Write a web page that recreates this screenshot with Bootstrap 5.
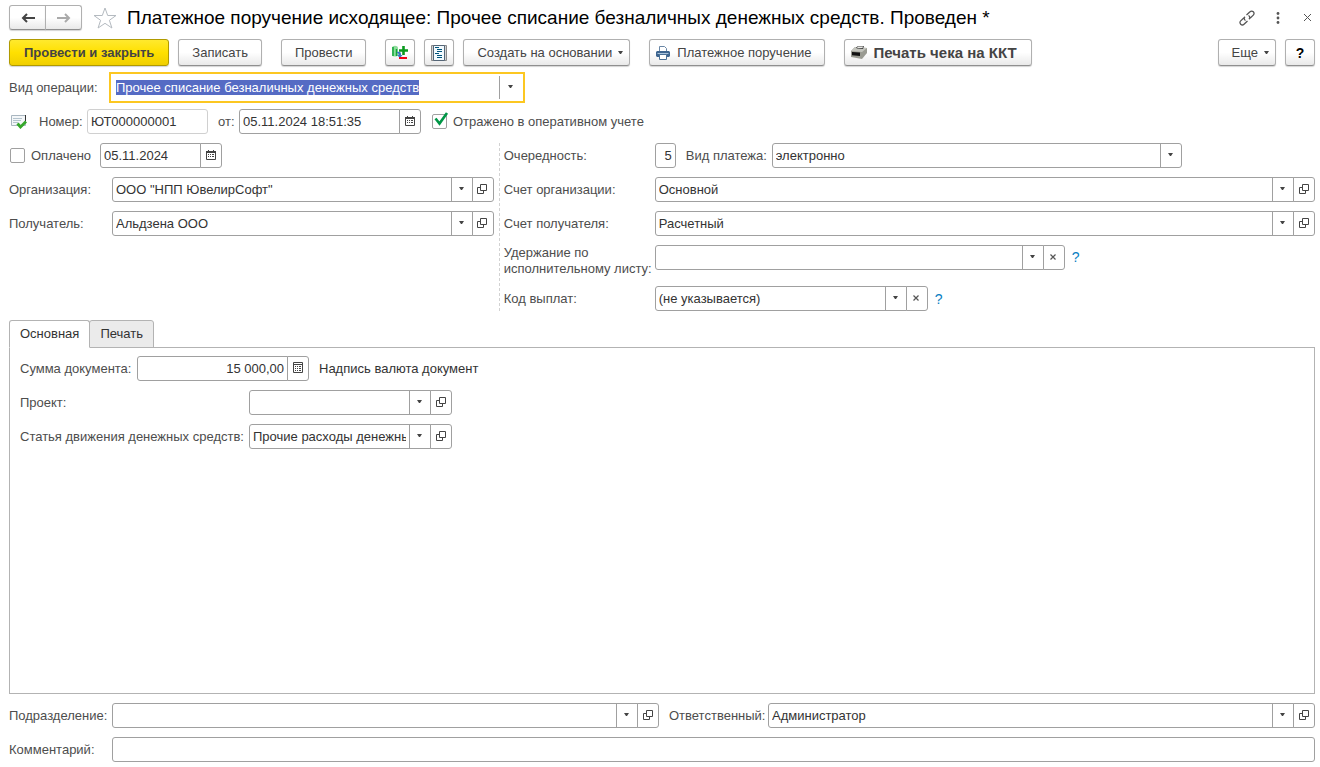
<!DOCTYPE html>
<html lang="ru">
<head>
<meta charset="utf-8">
<meta name="viewport" content="width=device-width, initial-scale=1">
<title>Платежное поручение исходящее</title>
<link href="https://cdn.jsdelivr.net/npm/bootstrap@5.3.0/dist/css/bootstrap.min.css" rel="stylesheet">
<style>
  :root { --line: #a0a0a0; --ink: #333; --label: #4d4d4d; }
  body { font: 13px/16px "Liberation Sans", Arial, sans-serif; color: var(--label); background: #fff; }
  .doc-form { padding: 5px 5px 5px 9px; }
  .doc-title { font-size: 19px; line-height: 24px; font-weight: 400; color: #000; margin: 0 0 0 10px; }
  svg { display: block; flex: none; }

  /* command buttons */
  .btn-cmd { --bs-btn-font-size: 13px; --bs-btn-line-height: 16px; --bs-btn-border-radius: 3px;
    --bs-btn-color: #444; --bs-btn-hover-color: #222; --bs-btn-border-color: #b0b0b0; --bs-btn-hover-border-color: #909090;
    height: 27px; padding: 0 13px; display: inline-flex; align-items: center; white-space: nowrap;
    background: linear-gradient(#fff 50%, #e9e9e9); border-bottom-color: #8f8f8f; box-shadow: 0 1px 1px #d4d4d4; }
  .btn-main { padding: 0 14px; background: linear-gradient(#ffe92e, #ffe000 50%, #f0cf00); border-color: #b09a00; font-weight: 700; }
  .btn-square { width: 30px; padding: 0; justify-content: center; }
  .btn-menu { padding-right: 6px; gap: 6px; }
  .btn-print { padding: 0 12px 0 6px; gap: 7px; }
  .btn-receipt { --bs-btn-font-size: 15px; font-weight: 700; padding-right: 14px; }
  .btn-help { --bs-btn-font-size: 14px; --bs-btn-color: #000; font-weight: 700; }
  .btn-nav { width: 37px; height: 25px; padding: 0; justify-content: center; }
  .btn-plain { padding: 0; border: 0; background: none; color: #4d4d4d; }
  .btn-star { margin-left: 11px; }
  .toolbar { gap: 9px; margin-top: 9px; }
  .group-start { margin-left: 10px; }
  .window-tools { gap: 17px; padding-right: 4px; }

  /* field rows */
  .line { display: flex; align-items: center; margin-top: 9px; }
  .line > label, .line > span { flex: none; }
  .line-tight { margin-top: 6px; }
  .cap { width: 103px; }
  .cap-op { width: 100px; }
  .cap-right { width: 151px; }
  .cap-tab { width: 229px; }
  .cap-sum { width: 117px; }
  .cap-pay { width: 86px; }
  .cap-resp { width: 99px; }
  .cap-num { width: 48px; }
  .cap-from { width: 21px; }
  .cap-paid { width: 69px; }
  .gap-before { margin-left: 10px; }
  .fld { width: auto; flex-wrap: nowrap; height: 25px; min-width: 0; }
  .fld > .form-control, .fld > .form-select { font-size: 13px; line-height: 16px; height: 25px; min-height: 0; padding: 0 3px;
    color: var(--ink); border-color: var(--line); border-radius: 3px; min-width: 0; background-color: #fff; }
  .fld > .btn { width: 22px; height: 25px; padding: 0 1px 2px 0; display: flex; align-items: center; justify-content: center;
    border-color: var(--line); border-radius: 3px; color: #444; background: #fff; flex: none; }
  .fld > .form-select { padding-right: 24px;
    background: #fff url("data:image/svg+xml,%3Csvg xmlns='http://www.w3.org/2000/svg' width='21' height='23'%3E%3Cpath d='M0 0h1v23H0z' fill='%23a0a0a0'/%3E%3Cpath d='M8 9h5l-2 3h-1z' fill='%23444'/%3E%3C/svg%3E") no-repeat right 0 top 0 / 21px 23px; }
  .fld > .form-control:focus { box-shadow: none; }
  .num { text-align: right; }
  .w-code { flex: 0 1 273px; }
  .w-wide { flex: 0 1 410px; }
  .w-date { width: 122px; }
  .w-stamp { width: 182px; }
  .w-sum { width: 172px; }
  .w-ref { width: 203px; }
  .w-number { width: 121px; }
  .w-order { width: 21px; }
  .fld > .quiet { border-color: #d0d0d0; }
  .status-icon { margin: 0 12px 0 2px; }

  .fld-active { width: 416px; height: 31px; border: 2px solid #fcc721; padding: 2px; align-items: center; }
  .fld-active > .form-control { border: 0; height: 23px; padding: 0 3px; border-radius: 0; }
  .fld-active > .btn { border-width: 0 0 0 1px; border-radius: 0; height: 23px; margin-left: 0 !important; }
  .fld-active > .form-control::selection { background: rgba(84,106,196,.996); color: #fff; }

  .tick { appearance: none; position: relative; flex: none; width: 15px; height: 15px; margin: 0 6px 0 1px; border: 1px solid var(--line); border-radius: 2px; background: #fff; }
  .tick:checked::after { content: ""; position: absolute; left: 1px; top: -3px; width: 15px; height: 14px;
    background: url("data:image/svg+xml,%3Csvg xmlns='http://www.w3.org/2000/svg' width='15' height='14'%3E%3Cpath d='M1.500 6.500l4 5L13 1' fill='none' stroke='%23009646' stroke-width='2.600'/%3E%3C/svg%3E") no-repeat; }
  .hint { color: #0a7ec2; text-decoration: none; font-size: 14px; margin-left: 7px; }

  .halves { display: grid; grid-template-columns: minmax(0, 3fr) minmax(0, 5fr); margin-top: 9px; }
  .half-left { padding-right: 5px; }
  .half-right { padding-left: 4px; border-left: 1px dashed #d2d2d2; }
  .halves .line:first-child { margin-top: 0; }
  .line-double { height: 32px; align-items: flex-start; }
  .line-double .hint { line-height: 25px; }

  /* tabs */
  .tabs { margin-top: 9px; border: 0; }
  .tabs .nav-link { height: 28px; padding: 0 10px; font-size: 13px; line-height: 16px; color: var(--ink); border: 1px solid #b3b3b3;
    border-radius: 3px 3px 0 0; background: #ebebeb; margin: 0 0 -1px; }
  .tabs .nav-item + .nav-item { margin-left: -1px; }
  .tabs .nav-link.active { color: var(--ink); background: #fff; border-color: #b3b3b3 #b3b3b3 #fff; position: relative; z-index: 1; }
  .sheet { border: 1px solid #b3b3b3; padding: 0 10px; color: var(--ink); }
  .sheet label { color: var(--label); }
  .sheet .line:first-child { margin-top: 8px; }
</style>
</head>
<body>
<svg width="0" height="0" class="position-absolute" aria-hidden="true">
  <symbol id="i-down" viewBox="0 0 5 3"><path d="M0 0h5L3 3H2z" fill="#444"/></symbol>
  <symbol id="i-open" viewBox="0 0 10 10"><path d="M3.500.5h6v6h-6zM3.500 3.500h-3v6h6v-3" fill="none" stroke="#444"/></symbol>
  <symbol id="i-clear" viewBox="0 0 6 6"><path d="M.5.5l5 5M5.500.5l-5 5" stroke="#555" stroke-width="1.200"/></symbol>
  <symbol id="i-cal" viewBox="0 0 10 10"><path d="M.5 1.500h9v8h-9zM2.500 0v2M7.500 0v2" fill="none" stroke="#444"/><path d="M0 1h10v2H0zM2 4h1v1H2zM4 4h1v1H4zM6 4h2v1H6zM2 6h1v1H2zM4 6h1v1H4zM6 6h2v1H6z" fill="#444"/></symbol>
  <symbol id="i-calc" viewBox="0 0 10 11"><path d="M.5.5h9v10h-9zM0 2.500h10" fill="none" stroke="#444"/><path d="M2 4h1v1H2zM4 4h1v1H4zM6 4h2v1H6zM2 6h1v1H2zM4 6h1v1H4zM6 6h2v1H6zM2 8h1v1H2zM4 8h1v1H4zM6 8h2v1H6z" fill="#444"/></symbol>
</svg>

<main class="doc-form d-flex flex-column min-vh-100">
  <header class="d-flex align-items-center">
    <div class="btn-group">
      <button type="button" class="btn btn-cmd btn-nav" aria-label="Назад"><svg width="14" height="10" viewBox="0 0 14 10"><path d="M14 5H2M6 1L2 5l4 4" fill="none" stroke="#444" stroke-width="2"/></svg></button>
      <button type="button" class="btn btn-cmd btn-nav" aria-label="Вперед"><svg width="14" height="10" viewBox="0 0 14 10"><path d="M0 5h12M8 1l4 4-4 4" fill="none" stroke="#aaa" stroke-width="2"/></svg></button>
    </div>
    <button type="button" class="btn btn-plain btn-star" aria-label="В избранное"><svg width="24" height="22" viewBox="0 0 24 22"><path d="M12 1l2.700 7.500H23l-6.600 4.800 2.500 7.700-6.900-4.700L5.100 21l2.500-7.700L1 8.500h8.300z" fill="#fff" stroke="#b4bac0"/></svg></button>
    <h1 class="doc-title flex-grow-1">Платежное поручение исходящее: Прочее списание безналичных денежных средств. Проведен *</h1>
    <div class="window-tools d-flex align-items-center">
      <button type="button" class="btn btn-plain" aria-label="Ссылка"><svg width="16" height="16" viewBox="0 0 16 16"><path d="M6.500 10.500C5 9.500 4.800 8 6 6.800M7.500 5L11 1.800c1-1 2.300-1 3.300 0s1 2.300 0 3.300L11 8.300M9.500 5.500c1.500 1 1.700 2.500.5 3.700M8.500 11L5 14.200c-1 1-2.300 1-3.300 0s-1-2.300 0-3.300L5 7.700" fill="none" stroke="#555" stroke-width="1.300"/></svg></button>
      <button type="button" class="btn btn-plain" aria-label="Меню"><svg width="11" height="12" viewBox="0 0 11 12"><g fill="#555"><circle cx="6" cy="1.500" r="1.400"/><circle cx="6" cy="6" r="1.400"/><circle cx="6" cy="10.500" r="1.400"/></g></svg></button>
      <button type="button" class="btn btn-plain ms-1" aria-label="Закрыть"><svg width="7" height="7" viewBox="0 0 7 7"><path d="M0 0l7 7M7 0L0 7" stroke="#555"/></svg></button>
    </div>
  </header>

  <div class="toolbar d-flex">
    <button type="button" class="btn btn-cmd btn-main">Провести и закрыть</button>
    <button type="button" class="btn btn-cmd">Записать</button>
    <button type="button" class="btn btn-cmd group-start">Провести</button>
    <button type="button" class="btn btn-cmd btn-square group-start" aria-label="Движения"><svg width="16" height="16" viewBox="0 0 16 16"><path d="M0 3c0-3 6-3 6 0v7c0 2-6 2-6 0z" fill="#8fdc9c"/><path d="M1 2v9M4.500 4v7" stroke="#12a53a" stroke-width="1.500"/><path d="M5 7c4-1 4 1 4 3h1.500L8 13l-3-3h1.500C6.500 8.500 6 8 5 8z" fill="#3a78c0"/><path d="M7 5.500h9M11.500 1v9" stroke="#0a9a1e" stroke-width="2.600"/><path d="M7 12h8v2H7z" fill="#f00018"/></svg></button>
    <button type="button" class="btn btn-cmd btn-square" aria-label="Отчет"><svg width="16" height="16" viewBox="0 0 16 16"><path d="M.5.5h15v15H.5z" fill="#d4d4d4" stroke="#8a8a8a"/><path d="M2.500.5h11v15h-11z" fill="#f2fafe" stroke="#567"/><path d="M4 2h4v1H4zM6 4h5v1H6zM6 6h5v1H6zM4 8h4v1H4zM6 10h5v1H6zM6 12h5v1H6z" fill="#00547c"/></svg></button>
    <button type="button" class="btn btn-cmd btn-menu">Создать на основании<svg width="5" height="3"><use href="#i-down"/></svg></button>
    <button type="button" class="btn btn-cmd btn-print group-start"><svg width="14" height="14" viewBox="0 0 14 14"><path d="M3.500 5V.5h5l2 2V5" fill="#fff" stroke="#6a87a6"/><path d="M1 5h12l1 1v4l-1 1H1l-1-1V6z" fill="#3d6590"/><path d="M1.500 7.500h11" stroke="#a9c3dc"/><path d="M3.500 8.500h7v5h-7z" fill="#fff" stroke="#4a7096"/></svg>Платежное поручение</button>
    <button type="button" class="btn btn-cmd btn-print btn-receipt group-start"><svg width="16" height="14" viewBox="0 0 16 14"><path d="M0 5l4-4 12 1v5l-5 6-11-2z" fill="#9a9b92"/><path d="M4 1l12 1-5 4-11-1z" fill="#c4c5be"/><path d="M5 1.500L7 0h6l-1 3-6-.5z" fill="#444"/><path d="M7 .5h5l-.5 1.500H6z" fill="#e8e8e4"/><path d="M1 6l8 .5v3.500l-8-.7z" fill="#111"/></svg>Печать чека на ККТ</button>
    <button type="button" class="btn btn-cmd btn-menu ms-auto">Еще<svg width="5" height="3"><use href="#i-down"/></svg></button>
    <button type="button" class="btn btn-cmd btn-square btn-help" aria-label="Справка">?</button>
  </div>

  <div class="line line-tight">
    <label class="cap-op" for="op">Вид операции:</label>
    <div class="input-group fld fld-active"><input id="op" class="form-control" value="Прочее списание безналичных денежных средств"><button type="button" class="btn" aria-label="Выбрать"><svg width="5" height="3"><use href="#i-down"/></svg></button></div>
  </div>

  <div class="line line-tight">
    <svg class="status-icon" width="16" height="14" viewBox="0 0 16 14"><path d="M.5.5h14v10H.5z" fill="#f4f7f9" stroke="#a9b6c0"/><path d="M14.500 0v6" stroke="#333"/><path d="M2 3.500h9M2 5.500h8M2 7.500h5" stroke="#b5c4ce"/><path d="M6.500 8.500l3 3.500 5.500-5.500" fill="none" stroke="#35a82a" stroke-width="2.800"/></svg>
    <label class="cap-num" for="num">Номер:</label>
    <div class="input-group fld w-number"><input id="num" class="form-control quiet" value="ЮТ000000001"></div>
    <label class="cap-from gap-before" for="stamp">от:</label>
    <div class="input-group fld w-stamp"><input id="stamp" class="form-control" value="05.11.2024 18:51:35"><button type="button" class="btn" aria-label="Календарь"><svg width="10" height="10"><use href="#i-cal"/></svg></button></div>
    <div class="d-flex align-items-center gap-before"><input type="checkbox" class="tick" id="oper" checked><label for="oper">Отражено в оперативном учете</label></div>
  </div>

  <div class="halves">
    <div class="half-left">
      <div class="line">
        <input type="checkbox" class="tick" id="paid"><label class="cap-paid" for="paid">Оплачено</label>
        <div class="input-group fld w-date"><input class="form-control" aria-label="Дата оплаты" value="05.11.2024"><button type="button" class="btn" aria-label="Календарь"><svg width="10" height="10"><use href="#i-cal"/></svg></button></div>
      </div>
      <div class="line">
        <label class="cap" for="org">Организация:</label>
        <div class="input-group fld flex-fill"><input id="org" class="form-control" value="ООО &quot;НПП ЮвелирСофт&quot;"><button type="button" class="btn" aria-label="Выбрать"><svg width="5" height="3"><use href="#i-down"/></svg></button><button type="button" class="btn" aria-label="Открыть"><svg width="10" height="10"><use href="#i-open"/></svg></button></div>
      </div>
      <div class="line">
        <label class="cap" for="payee">Получатель:</label>
        <div class="input-group fld flex-fill"><input id="payee" class="form-control" value="Альдзена ООО"><button type="button" class="btn" aria-label="Выбрать"><svg width="5" height="3"><use href="#i-down"/></svg></button><button type="button" class="btn" aria-label="Открыть"><svg width="10" height="10"><use href="#i-open"/></svg></button></div>
      </div>
    </div>
    <div class="half-right">
      <div class="line">
        <label class="cap-right" for="order">Очередность:</label>
        <div class="input-group fld w-order"><input id="order" class="form-control num" value="5"></div>
        <label class="cap-pay gap-before" for="pay">Вид платежа:</label>
        <div class="input-group fld w-wide"><select id="pay" class="form-select"><option>электронно</option></select></div>
      </div>
      <div class="line">
        <label class="cap-right" for="acc">Счет организации:</label>
        <div class="input-group fld flex-fill"><input id="acc" class="form-control" value="Основной"><button type="button" class="btn" aria-label="Выбрать"><svg width="5" height="3"><use href="#i-down"/></svg></button><button type="button" class="btn" aria-label="Открыть"><svg width="10" height="10"><use href="#i-open"/></svg></button></div>
      </div>
      <div class="line">
        <label class="cap-right" for="pacc">Счет получателя:</label>
        <div class="input-group fld flex-fill"><input id="pacc" class="form-control" value="Расчетный"><button type="button" class="btn" aria-label="Выбрать"><svg width="5" height="3"><use href="#i-down"/></svg></button><button type="button" class="btn" aria-label="Открыть"><svg width="10" height="10"><use href="#i-open"/></svg></button></div>
      </div>
      <div class="line line-double">
        <label class="cap-right" for="hold">Удержание по<br>исполнительному листу:</label>
        <div class="input-group fld w-wide"><select id="hold" class="form-select"><option></option></select><button type="button" class="btn" aria-label="Очистить"><svg width="6" height="6"><use href="#i-clear"/></svg></button></div>
        <a class="hint" href="#">?</a>
      </div>
      <div class="line">
        <label class="cap-right" for="code">Код выплат:</label>
        <div class="input-group fld w-code"><select id="code" class="form-select"><option>(не указывается)</option></select><button type="button" class="btn" aria-label="Очистить"><svg width="6" height="6"><use href="#i-clear"/></svg></button></div>
        <a class="hint" href="#">?</a>
      </div>
    </div>
  </div>

  <ul class="nav nav-tabs tabs" role="tablist">
    <li class="nav-item" role="presentation"><button type="button" class="nav-link active" data-bs-toggle="tab" data-bs-target="#tab-main" role="tab">Основная</button></li>
    <li class="nav-item" role="presentation"><button type="button" class="nav-link" data-bs-toggle="tab" data-bs-target="#tab-print" role="tab">Печать</button></li>
  </ul>
  <div class="tab-content sheet flex-grow-1">
    <div class="tab-pane active" id="tab-main" role="tabpanel">
      <div class="line">
        <label class="cap-sum" for="sum">Сумма документа:</label>
        <div class="input-group fld w-sum"><input id="sum" class="form-control num" value="15 000,00"><button type="button" class="btn" aria-label="Калькулятор"><svg width="10" height="11"><use href="#i-calc"/></svg></button></div>
        <span class="gap-before">Надпись валюта документ</span>
      </div>
      <div class="line">
        <label class="cap-tab" for="proj">Проект:</label>
        <div class="input-group fld w-ref"><input id="proj" class="form-control"><button type="button" class="btn" aria-label="Выбрать"><svg width="5" height="3"><use href="#i-down"/></svg></button><button type="button" class="btn" aria-label="Открыть"><svg width="10" height="10"><use href="#i-open"/></svg></button></div>
      </div>
      <div class="line">
        <label class="cap-tab" for="flow">Статья движения денежных средств:</label>
        <div class="input-group fld w-ref"><input id="flow" class="form-control" value="Прочие расходы денежных средств"><button type="button" class="btn" aria-label="Выбрать"><svg width="5" height="3"><use href="#i-down"/></svg></button><button type="button" class="btn" aria-label="Открыть"><svg width="10" height="10"><use href="#i-open"/></svg></button></div>
      </div>
    </div>
    <div class="tab-pane" id="tab-print" role="tabpanel"></div>
  </div>

  <div class="line">
    <label class="cap" for="dept">Подразделение:</label>
    <div class="input-group fld flex-fill"><input id="dept" class="form-control"><button type="button" class="btn" aria-label="Выбрать"><svg width="5" height="3"><use href="#i-down"/></svg></button><button type="button" class="btn" aria-label="Открыть"><svg width="10" height="10"><use href="#i-open"/></svg></button></div>
    <label class="cap-resp gap-before" for="resp">Ответственный:</label>
    <div class="input-group fld flex-fill"><input id="resp" class="form-control" value="Администратор"><button type="button" class="btn" aria-label="Выбрать"><svg width="5" height="3"><use href="#i-down"/></svg></button><button type="button" class="btn" aria-label="Открыть"><svg width="10" height="10"><use href="#i-open"/></svg></button></div>
  </div>
  <div class="line">
    <label class="cap" for="note">Комментарий:</label>
    <div class="input-group fld flex-fill"><input id="note" class="form-control"></div>
  </div>
</main>
<script src="https://cdn.jsdelivr.net/npm/bootstrap@5.3.0/dist/js/bootstrap.bundle.min.js"></script>
<script>
  const op = document.getElementById('op');
  op.focus();
  op.select();
</script>
</body>
</html>
